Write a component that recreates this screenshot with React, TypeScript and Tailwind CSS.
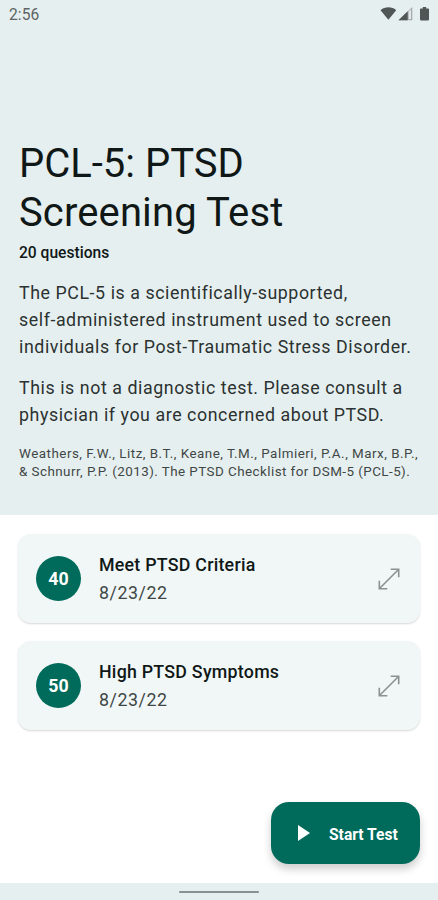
const results = [
  { score: 40, title: "Meet PTSD Criteria", date: "8/23/22" },
  { score: 50, title: "High PTSD Symptoms", date: "8/23/22" },
];

function StatusBar() {
  return (
    <div className="flex h-[28px] items-center justify-between pl-[9px] pr-[8px] text-[#5d6464]">
      <span className="pt-px text-[15.6px] leading-[28px] tracking-[0.1px]">2:56</span>
      <svg width="50" height="14" viewBox="0 0 50 14" fill="#505655">
        <path d="M0.5 3.2C5 -.6 12 -.6 16.2 3.2L8.4 12.8Z" />
        <path d="M18.5 13.2L32.3 0V13.2Z" fill="#a6adac" />
        <path d="M18.5 13.2L27.7 4.3V13.2Z" />
        <path d="M28.7 4.7L31 2.3V12H28.7Z" fill="#e2e9e8" />
        <path d="M40.7 1.4H42.8V0H46.2V1.4H48.3Q49 1.4 49 2.1V12.6Q49 13.4 48.2 13.4H40.8Q40 13.4 40 12.6V2.1Q40 1.4 40.7 1.4Z" />
      </svg>
    </div>
  );
}

function ExpandIcon() {
  return (
    <svg width="22" height="22" viewBox="0 0 22 22" fill="none" stroke="#8b9190" strokeWidth="1.6">
      <path d="M1.5 20.5L20.5 1.5M12.7 1.3H20.7V9.3M1.3 12.7V20.7H9.3" />
    </svg>
  );
}

export default function App() {
  return (
    <div className="flex h-[900px] w-[438px] flex-col overflow-hidden bg-white font-[Roboto,sans-serif] text-[#101817]">
      <header className="h-[515px] shrink-0 bg-[#e6efef]">
        <StatusBar />
        <div className="whitespace-nowrap pl-[19px] pt-[111px]">
          <h1 className="text-[40px] leading-[49px]">
            PCL-5: PTSD
            <br />
            <span className="tracking-[0.12px]">Screening Test</span>
          </h1>
          <p className="mt-[5px] text-[15.6px] font-medium leading-[22px]">20 questions</p>
          <p className="mt-[16px] text-[17.8px] leading-[26.8px] tracking-[0.57px] text-[#2b3231]">
            The PCL-5 is a scientifically-supported,
            <br />
            self-administered instrument used to screen
            <br />
            individuals for Post-Traumatic Stress Disorder.
          </p>
          <p className="mt-[15px] text-[17.8px] leading-[26.8px] tracking-[0.57px] text-[#2b3231]">
            This is not a diagnostic test. Please consult a
            <br />
            physician if you are concerned about PTSD.
          </p>
          <p className="mt-[16px] text-[13.4px] leading-[17.8px] tracking-[0.45px] text-[#3f4746]">
            <span className="tracking-[0.5px]">Weathers, F.W., Litz, B.T., Keane, T.M., Palmieri, P.A., Marx, B.P.,</span>
            <br />
            &amp; Schnurr, P.P. (2013). The PTSD Checklist for DSM-5 (PCL-5).
          </p>
        </div>
      </header>

      <main className="flex flex-1 flex-col gap-[18px] px-[18px] pt-[19px]">
        {results.map((result) => (
          <section
            key={result.score}
            className="flex h-[89px] items-center rounded-[13px] bg-[#f1f7f7] pl-[18px] pr-[20px] shadow-[0_1px_2px_rgba(0,0,0,0.16)]"
          >
            <div className="flex size-[45px] items-center justify-center rounded-full bg-[#006b5b] pt-px text-[17.8px] font-bold text-white">
              {result.score}
            </div>
            <div className="ml-[18px] flex-1 whitespace-nowrap text-[17.8px] leading-[28px]">
              <div className="font-medium tracking-[0.25px]">{result.title}</div>
              <div className="tracking-[0.57px] text-[#3f4746]">{result.date}</div>
            </div>
            <ExpandIcon />
          </section>
        ))}
        <button className="mb-[19px] mt-auto flex h-[62px] w-[149px] items-center self-end rounded-[18px] bg-[#006b5b] pl-[26px] text-white shadow-[0_5px_8px_rgba(0,0,0,0.2)]">
          <svg width="14" height="16" viewBox="0 0 14 16" fill="currentColor">
            <path d="M1 0L13 8L1 16Z" />
          </svg>
          <span className="ml-[18px] whitespace-nowrap pt-[3px] text-[15.6px] font-bold leading-[22px]">Start Test</span>
        </button>
      </main>

      <footer className="flex h-[17px] shrink-0 justify-center bg-[#e6efef] pt-[8px]">
        <div className="h-[2px] w-[80px] rounded-full bg-[#879190]" />
      </footer>
    </div>
  );
}
